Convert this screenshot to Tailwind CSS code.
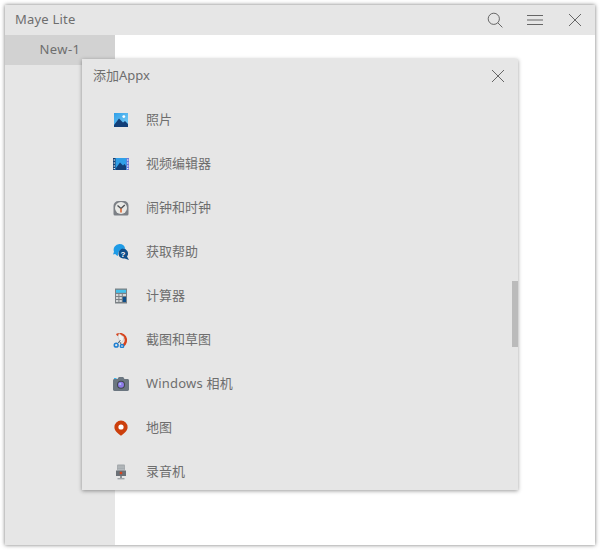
<!DOCTYPE html>
<html lang="zh-CN">
<head>
  <meta charset="UTF-8">
  <title>Maye Lite</title>
  <script src="https://cdn.jsdelivr.net/npm/@tailwindcss/browser@4"></script>
</head>
<body class="w-[600px] h-[550px] overflow-hidden bg-white p-[5px] font-['Noto_Sans','Noto_Sans_CJK_SC',sans-serif] text-[#6e6e6e]">
  <div class="relative w-[590px] h-[540px] flex flex-col bg-white shadow-[0_0_4px_rgba(0,0,0,0.55)]">
    <!-- title bar -->
    <header class="h-[30px] flex items-center bg-[#e6e6e6] pl-[10px]">
      <span class="flex-1 text-[13px] tracking-[0.2px]">Maye Lite</span>
      <div class="flex items-center gap-[24px] pr-[12px]">
        <svg class="w-[16px] h-[16px]" viewBox="0 0 16 16" fill="none" stroke="#666" stroke-width="1"><circle cx="6.8" cy="6.8" r="5.6"/><path d="M10.8 10.8 15.4 15.4"/></svg>
        <svg class="w-[16px] h-[16px]" viewBox="0 0 16 16" fill="none" stroke="#666" stroke-width="1"><path d="M0 3.5H16M0 8H16M0 12.5H16"/></svg>
        <svg class="w-[16px] h-[16px]" viewBox="0 0 16 16" fill="none" stroke="#666" stroke-width="1"><path d="M2 2 14 14M14 2 2 14"/></svg>
      </div>
    </header>

    <div class="flex-1 flex">
      <!-- tabs -->
      <aside class="w-[110px] bg-[#e6e6e6]">
        <div class="h-[30px] flex items-center justify-center bg-[#d2d2d2] text-[13px] tracking-[0.4px]">New-1</div>
      </aside>
      <main class="flex-1 bg-white"></main>
    </div>

    <!-- add app popup -->
    <section class="absolute left-[77px] top-[54px] w-[436px] h-[431px] overflow-hidden bg-[#e6e6e6] shadow-[0_1px_4px_rgba(0,0,0,0.4)]">
      <div class="h-[33px] flex items-center justify-between pl-[11px] pr-[13px]">
        <span class="text-[13px]">添加Appx</span>
        <svg class="w-[14px] h-[14px]" viewBox="0 0 14 14" fill="none" stroke="#666" stroke-width="1"><path d="M1 1 13 13M13 1 1 13"/></svg>
      </div>
      <ul class="pt-[6px] pl-[31px] text-[13px]">
        <li class="h-[44px] flex items-center gap-[17px]">
          <svg class="w-[16px] h-[16px]" viewBox="0 0 16 16"><defs><linearGradient id="sky" x1="0" y1="0" x2="1" y2="1"><stop offset="0" stop-color="#2f9fe8"/><stop offset="1" stop-color="#7fd0f7"/></linearGradient></defs><rect x="1" y="1" width="14" height="14" fill="url(#sky)"/><path d="M1 13 6 6.5 10 10.5 12 9 15 12V15H1Z" fill="#123f78"/><circle cx="10.8" cy="4.6" r="1.4" fill="#fff"/></svg>
          <span>照片</span>
        </li>
        <li class="h-[44px] flex items-center gap-[17px]">
          <svg class="w-[16px] h-[16px]" viewBox="0 0 16 16"><rect y="2" width="16" height="12" fill="#2f9fe8"/><path d="M3 12 7 6.5 10 9.5 11.5 8 13 10V14H3Z" fill="#123f78"/><rect y="2" width="2.5" height="12" fill="#173f70"/><rect x="13.5" y="2" width="2.5" height="12" fill="#6f78d8"/><path d="M.6 4H2M.6 7H2M.6 10H2M.6 12.6H2M14 4H15.4M14 7H15.4M14 10H15.4M14 12.6H15.4" stroke="#fff" stroke-width="1"/></svg>
          <span>视频编辑器</span>
        </li>
        <li class="h-[44px] flex items-center gap-[17px]">
          <svg class="w-[16px] h-[16px]" viewBox="0 0 16 16"><path d="M.5 6A5 5 0 0 1 5.5 1H11A4.5 4.5 0 0 1 15.5 5.5V14A1.5 1.5 0 0 1 14 15.5H2A1.5 1.5 0 0 1 .5 14Z" fill="#7c8086"/><circle cx="8" cy="8" r="6" fill="#e9e9e6"/><path d="M8 8.5 4.5 5.5M8 8.5 11.8 5" stroke="#4f5256" stroke-width="1.4" fill="none"/><path d="M8 8.5V12.6" stroke="#d8551c" stroke-width="1.4"/></svg>
          <span>闹钟和时钟</span>
        </li>
        <li class="h-[44px] flex items-center gap-[17px]">
          <svg class="w-[16px] h-[16px]" viewBox="0 0 16 16"><path d="M6.5 0A5.8 5.8 0 0 1 12.2 5 6 6 0 0 0 5 12 5.8 5.8 0 0 1 2.2 10L0 10.5 1 7.8A5.8 5.8 0 0 1 6.5 0Z" fill="#1e9be6"/><path d="M10 4.6A5 5 0 0 1 14 12.6L16 16 11.8 14.4A5 5 0 1 1 10 4.6Z" fill="#0f4f8a"/><text x="10" y="12.6" text-anchor="middle" font-size="8" font-weight="700" fill="#fff" font-family="Liberation Sans, sans-serif">?</text></svg>
          <span>获取帮助</span>
        </li>
        <li class="h-[44px] flex items-center gap-[17px]">
          <svg class="w-[16px] h-[16px]" viewBox="0 0 16 16"><rect x="2" y=".5" width="12" height="15" fill="#7b8185"/><rect x="3" y="1.8" width="10" height="3" fill="#45c0ea"/><path d="M3 6h2.4v2H3zM6.4 6h2.4v2H6.4zM3 9h2.4v2H3zM6.4 9h2.4v2H6.4zM3 12h2.4v2H3zM6.4 12h2.4v2H6.4zM9.8 6h3.2v2H9.8z" fill="#d4d7d9"/><rect x="9.8" y="9" width="3.2" height="5" fill="#0f4f8a"/></svg>
          <span>计算器</span>
        </li>
        <li class="h-[44px] flex items-center gap-[17px]">
          <svg class="w-[16px] h-[16px]" viewBox="0 0 16 16" fill="none"><path d="M3.6 3A6 6 0 1 1 10 13.4" stroke="#d8431c" stroke-width="2.4"/><path d="M6 1.5 11 5 10 9 7.4 11 5 5Z" fill="#f3f0ee" stroke="#bdbdbd" stroke-width=".6"/><path d="M4.5 11.6 7.4 8.2M8 12 6.2 9" stroke="#5e6a75" stroke-width="1"/><circle cx="3.2" cy="13.2" r="1.9" stroke="#1f7fd1" stroke-width="1.5"/><circle cx="9" cy="14" r="1.6" stroke="#1f7fd1" stroke-width="1.5"/></svg>
          <span>截图和草图</span>
        </li>
        <li class="h-[44px] flex items-center gap-[17px]">
          <svg class="w-[16px] h-[16px]" viewBox="0 0 16 16"><path d="M0 4.5C0 3.7.6 3 1.4 3H4.5L5.8 1H10.2L11.5 3H14.6C15.4 3 16 3.7 16 4.5V13.6C16 14.4 15.4 15 14.6 15H1.4C.6 15 0 14.4 0 13.6Z" fill="#6b7680"/><rect x="1" y="2" width="2.5" height="1" fill="#38b3ea"/><circle cx="8" cy="8.8" r="4" fill="#3f464d"/><circle cx="8" cy="8.8" r="3" fill="#8f7be8"/><circle cx="7.2" cy="8" r="1.1" fill="#a9cdf5"/></svg>
          <span class="tracking-[0.2px]">Windows 相机</span>
        </li>
        <li class="h-[44px] flex items-center gap-[17px]">
          <svg class="w-[16px] h-[16px]" viewBox="0 0 16 16"><path d="M8 .6A6.6 6.6 0 0 1 14.6 7.2C14.6 10.4 11.6 13.2 8 15.8 4.4 13.2 1.4 10.4 1.4 7.2A6.6 6.6 0 0 1 8 .6Z" fill="#cc3f0c"/><circle cx="8" cy="7" r="2.6" fill="#fff"/></svg>
          <span>地图</span>
        </li>
        <li class="h-[44px] flex items-center gap-[17px]">
          <svg class="w-[16px] h-[16px]" viewBox="0 0 16 16"><rect x="4" y=".5" width="8" height="6" rx="1" fill="#a0a5a9"/><path d="M4.5 2.2H11.5M4.5 3.8H11.5M4.5 5.4H11.5" stroke="#c2c6c9" stroke-width=".7"/><rect x="3" y="6.5" width="10" height="5.5" fill="#6b7177"/><rect x="6.8" y="7.8" width="2.4" height="2.4" fill="#d8431c"/><rect x="7" y="12" width="2" height="2" fill="#8a9095"/><rect x="4.5" y="14" width="7" height="1.4" fill="#a0a5a9"/></svg>
          <span>录音机</span>
        </li>
      </ul>
      <!-- scrollbar -->
      <div class="absolute right-0 top-[222px] w-[6px] h-[66px] bg-[#bbbbbb]"></div>
    </section>
  </div>
</body>
</html>
